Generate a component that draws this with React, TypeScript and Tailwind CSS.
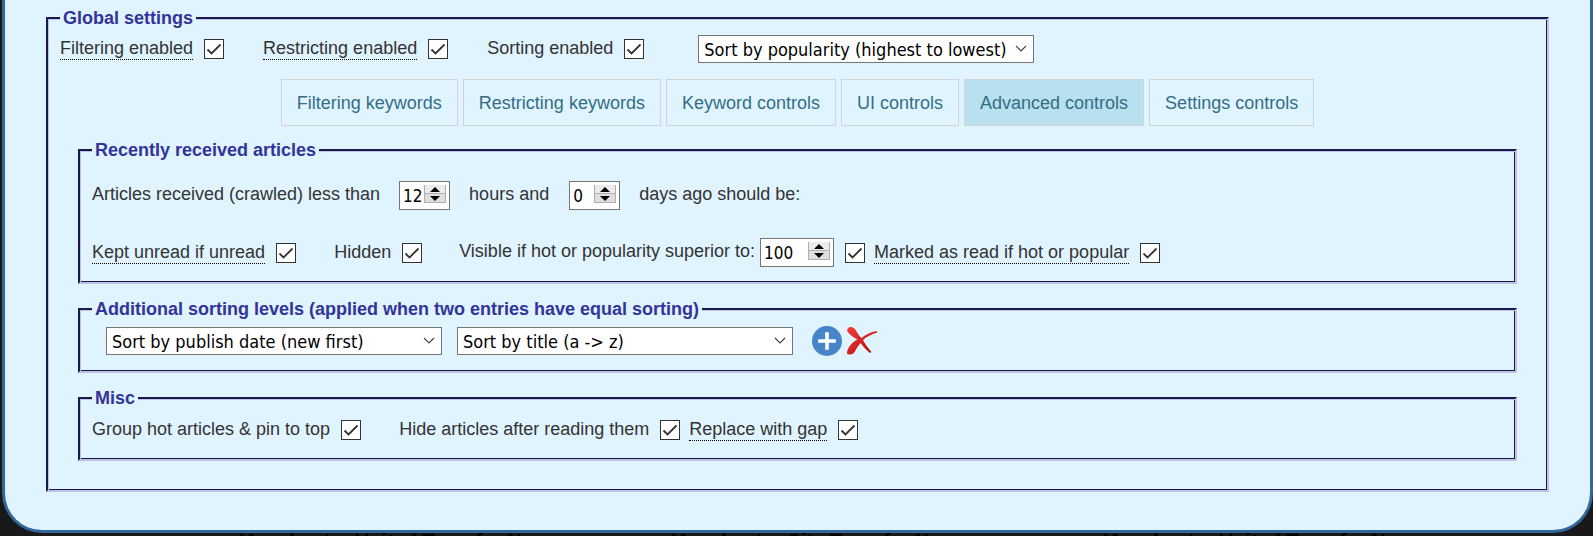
import { useState, type ReactNode } from 'react';

const controlFont = "font-['DejaVu_Sans_Condensed','DejaVu_Sans',sans-serif] text-black";

function Group({ title, className, children }: { title: string; className: string; children: ReactNode }) {
  return (
    <fieldset
      className={`min-w-0 border-2 border-t-[#19194d] border-l-[#19194d] border-r-[#c0c0e0] border-b-[#c0c0e0] shadow-[inset_1px_1px_0_#c0c0e0,inset_-1px_-1px_0_#19194d] ${className}`}
    >
      <legend className="bg-[#e0f4ff] px-[3px] font-bold leading-5 text-[#333399]">{title}</legend>
      {children}
    </fieldset>
  );
}

function Check({ id, label }: { id: string; label?: string }) {
  return (
    <span className="grid size-5 shrink-0">
      <input
        id={id}
        type="checkbox"
        defaultChecked
        aria-label={label}
        className="peer col-start-1 row-start-1 size-5 appearance-none border border-[#333] bg-white"
      />
      <svg
        viewBox="0 0 20 20"
        aria-hidden="true"
        className="pointer-events-none invisible col-start-1 row-start-1 size-5 peer-checked:visible"
      >
        <path d="M3.5 10.5 L7.5 14.5 L16.5 5.5" fill="none" stroke="#333" strokeWidth="1.8" />
      </svg>
    </span>
  );
}

function Option({ id, text, hint }: { id: string; text: string; hint?: boolean }) {
  return (
    <div className="flex items-center gap-[11px]">
      <label htmlFor={id} className={hint ? 'border-b border-dotted border-black leading-[21px]' : 'pb-px leading-[21px]'}>
        {text}
      </label>
      <Check id={id} />
    </div>
  );
}

function SortSelect({ label, options }: { label: string; options: string[] }) {
  return (
    <div className="grid w-[336px]">
      <select
        aria-label={label}
        className={`col-start-1 row-start-1 h-7 appearance-none border border-[#767676] bg-white pl-[5px] text-[18px] ${controlFont}`}
      >
        {options.map((o) => (
          <option key={o}>{o}</option>
        ))}
      </select>
      <svg
        viewBox="0 0 12 8"
        aria-hidden="true"
        className="pointer-events-none col-start-1 row-start-1 mr-[7px] h-2 w-3 self-center justify-self-end"
      >
        <path d="M1 1 L6 6 L11 1" fill="none" stroke="#444" strokeWidth="1.2" />
      </svg>
    </div>
  );
}

function Stepper({ id, label, initial, width }: { id: string; label: string; initial: number; width: string }) {
  const [value, setValue] = useState(initial);
  return (
    <div className={`flex h-[29px] items-center border border-[#767676] bg-white px-[3px] ${width}`}>
      <input
        id={id}
        aria-label={label}
        inputMode="numeric"
        value={value}
        onChange={(e) => setValue(Number(e.target.value) || 0)}
        className={`w-full min-w-0 pt-0.5 text-[17px] outline-none ${controlFont}`}
      />
      <div className="mb-[3px] flex w-[22px] shrink-0 flex-col gap-px border border-t-0 border-[#b0b0b0] bg-[#b0b0b0]">
        <button aria-label={`Increase ${label}`} onClick={() => setValue(value + 1)} className="flex h-2 items-center justify-center bg-[#ececec]">
          <svg viewBox="0 0 10 5" className="h-[5px] w-2.5"><path d="M0 5 L5 0 L10 5Z" /></svg>
        </button>
        <button aria-label={`Decrease ${label}`} onClick={() => setValue(value - 1)} className="flex h-2 items-center justify-center bg-[#dedede]">
          <svg viewBox="0 0 10 5" className="h-[5px] w-2.5"><path d="M0 0 L5 5 L10 0Z" /></svg>
        </button>
      </div>
    </div>
  );
}

const tabs = ['Filtering keywords', 'Restricting keywords', 'Keyword controls', 'UI controls', 'Advanced controls', 'Settings controls'];
const sorts = [
  'Sort by popularity (highest to lowest)',
  'Sort by publish date (new first)',
  'Sort by title (a -> z)',
];

export default function App() {
  const [active, setActive] = useState('Advanced controls');
  return (
    <div className="bg-[#191919] pl-0.5 font-['Liberation_Sans',Arial,sans-serif] text-[18px] text-[#333]">
      <main className="rounded-b-[40px] border-[3px] border-t-0 border-[#336699] bg-[#e0f4ff] px-[41px] pt-2 pb-[38px]">
        <Group title="Global settings" className="px-3 pb-[29px]">
          <div className="mt-[7px] flex items-center">
            <Option id="filtering" text="Filtering enabled" hint />
            <div className="ml-[39px]"><Option id="restricting" text="Restricting enabled" hint /></div>
            <div className="ml-[39px]"><Option id="sorting" text="Sorting enabled" /></div>
            <div className="ml-[54px]"><SortSelect label="Sorting" options={sorts} /></div>
          </div>

          <nav className="mt-4 flex justify-center gap-[5px]">
            {tabs.map((t) => (
              <button
                key={t}
                aria-pressed={t === active}
                onClick={() => setActive(t)}
                className={`h-[47px] border border-[#d3d3d3] px-[15px] pt-0.5 text-[#336e85] ${t === active ? 'bg-[#b8e0ee]' : ''}`}
              >
                {t}
              </button>
            ))}
          </nav>

          <div className="mx-[18px] mt-[14px]">
            <Group title="Recently received articles" className="px-3 pb-[15px]">
              <div className="mt-[21px] flex items-center">
                <label htmlFor="hours" className="pb-0.5">Articles received (crawled) less than</label>
                <div className="ml-[19px]"><Stepper id="hours" label="hours" initial={12} width="w-[51px]" /></div>
                <label htmlFor="hours" className="ml-[19px] pb-0.5">hours and</label>
                <div className="ml-5"><Stepper id="days" label="days" initial={0} width="w-[51px]" /></div>
                <label htmlFor="days" className="ml-[19px] pb-0.5">days ago should be:</label>
              </div>
              <div className="mt-7 flex items-center">
                <Option id="unread" text="Kept unread if unread" hint />
                <div className="ml-[38px]"><Option id="hidden" text="Hidden" /></div>
                <label htmlFor="superior" className="ml-[37px] pb-0.5">Visible if hot or popularity superior to:</label>
                <div className="ml-[5px]"><Stepper id="superior" label="popularity" initial={100} width="w-[74px]" /></div>
                <div className="mr-[9px] ml-[11px]"><Check id="visible" label="Visible if hot or popular" /></div>
                <Option id="marked" text="Marked as read if hot or popular" hint />
              </div>
            </Group>

            <Group title="Additional sorting levels (applied when two entries have equal sorting)" className="mt-[15px] px-3 pb-[15px]">
              <div className="mt-[7px] ml-[14px] flex items-center">
                <SortSelect label="Second sorting level" options={[sorts[1], sorts[0], sorts[2]]} />
                <div className="ml-[15px]"><SortSelect label="Third sorting level" options={[sorts[2], sorts[0], sorts[1]]} /></div>
                <button aria-label="Add sorting level" className="ml-[19px]">
                  <svg viewBox="0 0 30 30" className="size-[30px]">
                    <circle cx="15" cy="15" r="15" fill="#4785c8" />
                    <path d="M15 8 V22 M8 15 H22" stroke="#fff" strokeWidth="3.6" strokeLinecap="square" />
                  </svg>
                </button>
                <button aria-label="Remove sorting level" className="ml-[5px]">
                  <svg viewBox="0 0 30 30" className="size-[30px]">
                    <defs>
                      <linearGradient id="red" x1="0" y1="0" x2="1" y2="1">
                        <stop offset="0" stopColor="#f04040" />
                        <stop offset="1" stopColor="#b80000" />
                      </linearGradient>
                    </defs>
                    <path d="M1 2 C4 0 7 1.500 9 4.500 C11 8 12.500 10.500 14.500 12 C18 9 24 6 30 5 V6.500 C24 8.500 19 11 16 14 C18 18 21 22 24.500 26 L23 27 C19 24 16 20 13.500 17 C11 20 9 23 7.500 26 C5.500 29 1.500 29 0 27.500 C0 22 5 16 10.500 13.500 C6 11 1 8 0 4Z" fill="url(#red)" />
                  </svg>
                </button>
              </div>
            </Group>

            <Group title="Misc" className="mt-[15px] px-3 pb-[18px]">
              <div className="mt-[11px] flex items-center">
                <Option id="group" text="Group hot articles &amp; pin to top" />
                <div className="ml-[38px]"><Option id="hide" text="Hide articles after reading them" /></div>
                <div className="ml-[9px]"><Option id="gap" text="Replace with gap" hint /></div>
              </div>
            </Group>
          </div>
        </Group>
      </main>
      <div className="flex h-[3px] overflow-hidden pl-[236px] text-[20px] leading-4 font-bold whitespace-nowrap text-black">
        <span className="w-[432px]">Manchester United Transfer News</span>
        <span className="w-[432px]">Manchester City Transfer News</span>
        <span>Manchester United Transfer News</span>
      </div>
    </div>
  );
}
